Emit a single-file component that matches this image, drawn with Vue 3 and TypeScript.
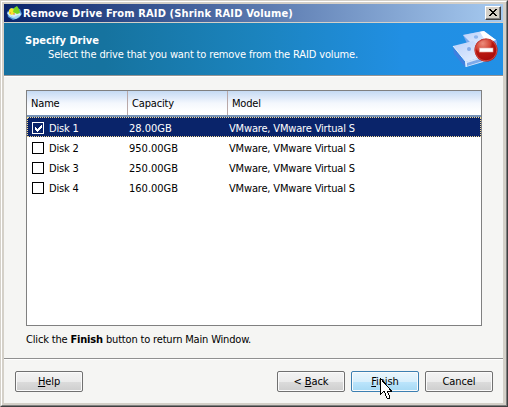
<script setup lang="ts">
import { ref } from 'vue'

interface Disk {
  name: string
  capacity: string
  model: string
  checked: boolean
}

const disks = ref<Disk[]>([
  { name: 'Disk 1', capacity: '28.00GB', model: 'VMware, VMware Virtual S', checked: true },
  { name: 'Disk 2', capacity: '950.00GB', model: 'VMware, VMware Virtual S', checked: false },
  { name: 'Disk 3', capacity: '250.00GB', model: 'VMware, VMware Virtual S', checked: false },
  { name: 'Disk 4', capacity: '160.00GB', model: 'VMware, VMware Virtual S', checked: false },
])
const selected = ref(0)
</script>

<template>
  <div class="window">
    <div class="inner">
      <div class="titlebar">
        <svg class="app-icon" width="16" height="16" viewBox="0 0 16 16">
          <path d="M1 7L6 3l8 1 2 5-3 4-6 2-5-3z" fill="#4b91d4" />
          <path d="M1 8l5-3 8 2 1 3-4 3-7-1z" fill="#d7effa" />
          <path d="M3 10l3 3 4 1 4-3-2-1-4 2z" fill="#a5d8f4" />
          <path d="M3 5l2-2 3 1 1 4-3 2-3-1z" fill="#f8e52c" />
          <path d="M8 3l3-2 2 3 1 4-3 1-4-2z" fill="#79d51e" />
          <path d="M4 8h1M7 9h2" stroke="#e8753b" />
        </svg>
        <span class="title">Remove Drive From RAID (Shrink RAID Volume)</span>
        <button class="close" aria-label="Close">
          <svg width="8" height="7" viewBox="0 0 8 7" shape-rendering="crispEdges">
            <path d="M0 0h2v1h1v1h2V1h1V0h2v1H7v1H6v1H5v1h1v1h1v1h1v1H6V6H5V5H3v1H2v1H0V6h1V5h1V4h1V3H2V2H1V1H0z" fill="#000" />
          </svg>
        </button>
      </div>

      <header class="banner">
        <div>
          <div class="heading">Specify Drive</div>
          <div class="subheading">Select the drive that you want to remove from the RAID volume.</div>
        </div>
        <svg class="drive-icon" width="48" height="40" viewBox="0 0 48 40">
          <defs>
            <linearGradient id="face" x1="0" y1="0" x2="1" y2="1">
              <stop offset="0" stop-color="#b9d0fa" />
              <stop offset="1" stop-color="#eef5ff" />
            </linearGradient>
            <radialGradient id="stop" cx=".35" cy=".2" r=".85">
              <stop offset="0" stop-color="#ec8d7c" />
              <stop offset=".42" stop-color="#d34535" />
              <stop offset=".52" stop-color="#b81810" />
              <stop offset="1" stop-color="#a60b0b" />
            </radialGradient>
          </defs>
          <path d="M12 6L33 2 46 12 46 21 20 23z" fill="#79a8ec" />
          <path d="M12 6L32 2 45 11 23 17z" fill="url(#face)" />
          <path d="M29 3l4-1 12 9-10 2z" fill="#fff" />
          <ellipse cx="25" cy="8" rx="2.2" ry="1.8" fill="#8fb6ee" />
          <path d="M2 18L14 33v5L3 25z" fill="#3f7fdf" />
          <path d="M2 17L22 12l18 13-25 8z" fill="url(#face)" />
          <path d="M14 33l25-8v6l-24 7z" fill="#d5e5fc" />
          <path d="M16 34l16-5v3l-16 5z" fill="#7daaea" />
          <path d="M2 17l13 16v5" fill="none" stroke="#e4effd" />
          <circle cx="18" cy="20" r="2" fill="#84abe8" />
          <circle cx="35" cy="21" r="11.5" fill="#b5160e" />
          <circle cx="35" cy="21" r="10.8" fill="url(#stop)" stroke="#d04a42" />
          <rect x="28.500" y="19" width="13.5" height="4" fill="#fff" stroke="#dfa39e" stroke-width=".6" />
        </svg>
      </header>

      <main class="content">
        <div class="list">
          <div class="row head">
            <span class="cell name">Name</span>
            <span class="cell capacity">Capacity</span>
            <span class="cell model">Model</span>
          </div>
          <div
            v-for="(disk, i) in disks"
            :key="disk.name"
            class="row item"
            :class="{ selected: i === selected }"
            @click="selected = i"
          >
            <span class="cell name">
              <span class="check" @click="disk.checked = !disk.checked">
                <svg v-if="disk.checked" width="7" height="7" viewBox="0 0 7 7" shape-rendering="crispEdges">
                  <path d="M0 2h1v1h1v1h1V3h1V2h1V1h1V0h1v3H6v1H5v1H4v1H3v1H2V6H1V5H0z" fill="#fff" />
                </svg>
              </span>
              <span class="label">{{ disk.name }}</span>
            </span>
            <span class="cell capacity"><span class="label">{{ disk.capacity }}</span></span>
            <span class="cell model"><span class="label">{{ disk.model }}</span></span>
          </div>
        </div>
        <p class="hint">Click the <b>Finish</b> button to return Main Window.</p>
      </main>

      <footer class="footer">
        <button class="btn help"><span><u>H</u>elp</span></button>
        <button class="btn"><span>&lt; <u>B</u>ack</span></button>
        <button class="btn hot">
          <span><u>F</u>inish</span>
          <svg class="cursor" width="12" height="21" viewBox="0 0 12 21" shape-rendering="crispEdges">
            <path d="M.5.5v16l3.500-3.500 3 7h2.500v-2l-2.500-5H11.500z" fill="#fff" stroke="#000" />
          </svg>
        </button>
        <button class="btn"><span>Cancel</span></button>
      </footer>
    </div>
  </div>
</template>

<style>
body {
  margin: 0;
  overflow: hidden;
}
</style>

<style scoped>
.window {
  box-sizing: border-box;
  width: 508px;
  height: 407px;
  background: #d4d0c8;
  border: 1px solid #d4d0c8;
  border-right-color: #404040;
  border-bottom-color: #404040;
  font: 11px/14px Tahoma, "DejaVu Sans Condensed", "DejaVu Sans", sans-serif;
  color: #000;
  white-space: nowrap;
}
.inner {
  box-sizing: border-box;
  height: 405px;
  border: 1px solid #fff;
  border-right-color: #808080;
  border-bottom-color: #808080;
  padding: 2px 3px 2px 2px;
  display: flex;
  flex-direction: column;
}
.titlebar {
  height: 18px;
  flex: none;
  display: flex;
  align-items: center;
  padding: 0 2px;
  border-bottom: 1px solid #d4d0c8;
  background: linear-gradient(90deg, #0a246a, #a6caf0);
  color: #fff;
  font-weight: bold;
}
.app-icon {
  flex: none;
}
.title {
  margin-left: 1px;
  padding-top: 1px;
  letter-spacing: 0.145px;
}
.close {
  box-sizing: border-box;
  width: 16px;
  height: 14px;
  padding: 0 1px 1px 0;
  margin-left: auto;
  display: flex;
  align-items: center;
  justify-content: center;
  background: #d4d0c8;
  border: 1px solid #fff;
  border-right-color: #404040;
  border-bottom-color: #404040;
  box-shadow: inset -1px -1px #808080;
}
.banner {
  box-sizing: border-box;
  height: 53px;
  flex: none;
  display: flex;
  justify-content: space-between;
  padding: 11px 4px 0 21px;
  background: linear-gradient(90deg, #1671a0 0, #16739f 20%, #1b83bd 50%, #218fe3 80%, #2190e6 100%);
  border-bottom: 1px solid #949494;
  color: #fff;
}
.heading {
  font-weight: bold;
}
.subheading {
  padding-left: 23px;
  letter-spacing: -0.15px;
}
.drive-icon {
  margin-top: -5px;
}
.content {
  height: 282px;
  flex: none;
  background: #f5f5f3;
  box-shadow: inset 0 1px #fff;
  letter-spacing: -0.17px;
}
.list {
  box-sizing: border-box;
  margin: 14px 21px 0 22px;
  height: 236px;
  border: 1px solid #808080;
  background: #fff;
}
.row {
  display: flex;
  box-sizing: border-box;
}
.cell {
  box-sizing: border-box;
  display: flex;
  align-items: center;
  padding-top: 2px;
}
.name {
  width: 100px;
}
.capacity {
  width: 100px;
}
.model {
  flex: 1;
}
.label {
  padding-top: 1px;
}
.head {
  height: 26px;
  background: linear-gradient(#c5daf3 0, #dce8f8 25%, #f3f7fd 50%, #fff 85%);
  border-bottom: 2px solid #7894b6;
}
.head .cell {
  padding-left: 4px;
}
.head .cell + .cell {
  border-left: 1px solid #b9a9a9;
  padding-left: 4px;
}
.item {
  height: 20px;
}
.item .name {
  padding-left: 5px;
}
.item .capacity {
  padding-left: 2px;
  letter-spacing: 0;
}
.item .model {
  padding-left: 2px;
}
.selected {
  background: #0a246a;
  border: 1px dotted #f5db95;
  color: #fff;
}
.selected .name {
  width: 99px;
  padding-left: 4px;
}
.check {
  box-sizing: border-box;
  width: 12px;
  height: 12px;
  border: 1px solid #000;
  display: flex;
  align-items: center;
  justify-content: center;
  margin-right: 5px;
}
.selected .check {
  border-color: #fff;
}
.hint {
  margin: 7px 0 0 22px;
}
.footer {
  box-sizing: border-box;
  flex: 1;
  display: flex;
  align-items: flex-start;
  gap: 6px;
  padding: 12px 10px 0 11px;
  background: #f5f5f3;
  border-top: 1px solid #909090;
  box-shadow: inset 0 1px #fff;
}
.btn {
  position: relative;
  box-sizing: border-box;
  width: 68px;
  height: 21px;
  padding: 0;
  border: 1px solid #707070;
  border-radius: 2px;
  background: linear-gradient(#f3f3f3 0, #ebebeb 50%, #dcdcdc 51%, #cecece 100%);
  box-shadow: inset 0 0 0 1px #fafafa;
  font: inherit;
  letter-spacing: -0.1px;
  color: #000;
}
.btn u {
  text-decoration: underline;
  text-underline-offset: 1px;
}
.help {
  margin-right: auto;
}
.hot {
  border-color: #3c7fb1;
  background: linear-gradient(#e9f6fd 0, #d8effc 50%, #bce5fc 51%, #a6d9f4 100%);
}
.cursor {
  position: absolute;
  left: 28px;
  top: 6px;
}
</style>
